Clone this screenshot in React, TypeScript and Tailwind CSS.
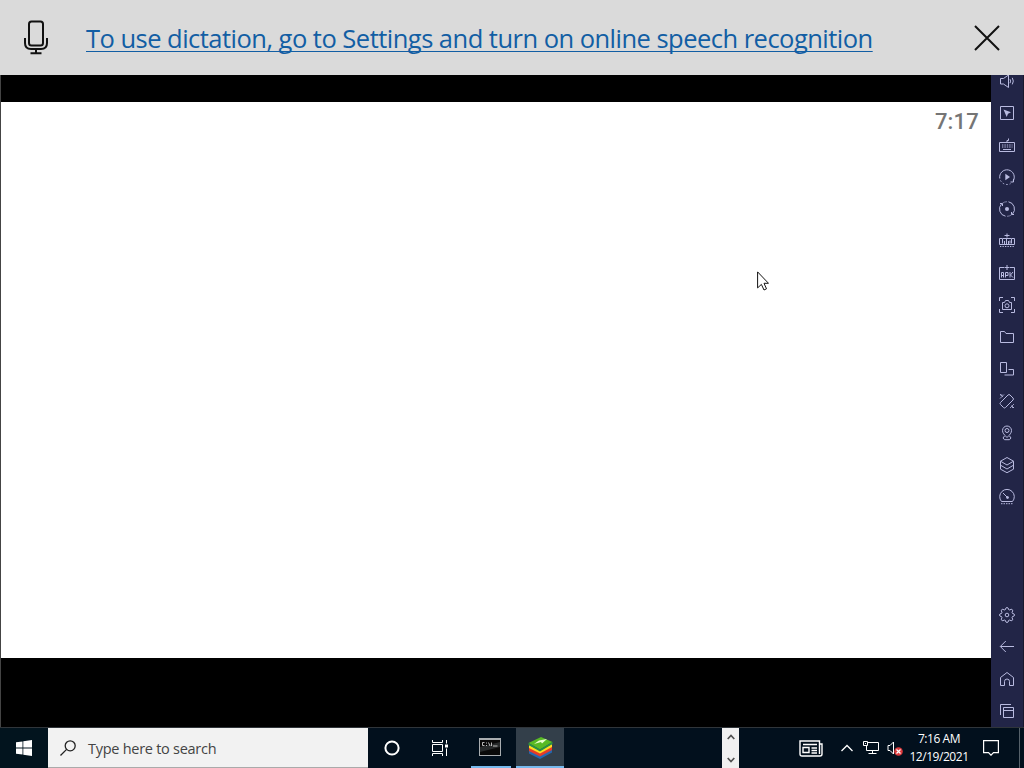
import type { ReactNode } from "react";

const toolIcons: { name: string; art: ReactNode }[] = [
	{
		name: "volume",
		art: (
			<>
				<path d="M3.5 7.5h3l5-3.5v12.500l-5-3.500h-3z" />
				<path d="M13 8.200q1.200 1.900 0 4M15.300 6.800q2 3.300 0 6.600" />
			</>
		),
	},
	{
		name: "pointer",
		art: (
			<>
				<path d="M3.500 3.500h13v13h-13z" />
				<path d="M6.500 6.500l7.500 2.800-3 1.500-1.300 3.200z" fill="currentColor" stroke="none" />
			</>
		),
	},
	{
		name: "keyboard",
		art: (
			<>
				<path d="M2.500 7.500h15v9h-15zM10 7V5.500h1.500V3.500" />
				<path d="M5 10h10.500M5 12h10.500" strokeDasharray="1.400 1" />
				<path d="M6 14.500h8" />
			</>
		),
	},
	{
		name: "macro",
		art: (
			<>
				<path d="M2.800 11.500A7.300 7.300 0 1 1 16 14.200M16.500 12v3h-3" />
				<path d="M3.500 13.500A7.500 7.500 0 0 0 13.500 16.700" strokeDasharray="1.500 2" />
				<path d="M8.300 6.800l4.700 3.200-4.700 3.200z" fill="currentColor" stroke="none" />
			</>
		),
	},
	{
		name: "sync",
		art: (
			<>
				<path d="M8.500 17.200A7.300 7.300 0 0 1 4.500 5M3 4.500h2.500V7M11.500 2.800A7.300 7.300 0 0 1 15.500 15M17 15.500h-2.500V13" />
				<path d="M5.500 4.200A7.300 7.300 0 0 1 10 2.700M14.500 15.800A7.300 7.300 0 0 1 10 17.300" strokeOpacity=".6" />
				<circle cx="10" cy="10" r="2" fill="currentColor" stroke="none" />
			</>
		),
	},
	{
		name: "memory",
		art: (
			<>
				<path d="M5 7.500H2.500v6h15v-6H15M10 2.500v4M7.500 4.500h5" />
				<path d="M5.500 12.500v-5h9v5M7.500 13V10M9.500 13V8M11.500 10v3M13 9.500v3" />
				<path d="M3 15.500h14" strokeDasharray="1.300 1.200" />
			</>
		),
	},
	{
		name: "apk",
		art: (
			<>
				<path d="M7 4.500H2.500v12h15v-12H13M10 2v5M7.500 4.500h5" />
				<path d="M4.500 14.500v-5h2v5M4.500 12.500h2M8.500 14.500v-5h2.500v3H8.500M13 9v5.500M16 9l-2.500 3 2.500 2.500" />
			</>
		),
	},
	{
		name: "screenshot",
		art: (
			<>
				<path d="M6 2.500H2.500V6M14 2.500h3.500V6M2.500 14v3.500H6M17.500 14v3.500H14" />
				<path d="M5.500 7.500h2l1-2h3l1 2h2v7h-9z" />
				<circle cx="10" cy="10.800" r="2" />
			</>
		),
	},
	{
		name: "folder",
		art: <path d="M3.500 15.500v-11h4l1.500 2h7.500v9z" />,
	},
	{
		name: "rotate",
		art: <path d="M3.500 3.500h6v10h-6zM11.500 10.500h5v5.500h-9" />,
	},
	{
		name: "shake",
		art: (
			<>
				<path d="M3.500 11.500l7.500-7.500q1-1 2 0l3 3q1 1 0 2l-7.500 7.500q-1 1-2 0l-3-3q-1-1 0-2z" />
				<path d="M3 7.500l4-4M3 4h2.500M3 3l3 3M13 17l4-4M14.500 14.500l2.500 2.500M15 16.500h2" strokeWidth=".8" />
			</>
		),
	},
	{
		name: "location",
		art: (
			<>
				<path d="M10 14.500C7 11.500 5.500 10 5.500 7.500a4.500 4.500 0 0 1 9 0c0 2.500-1.500 4-4.500 7z" />
				<circle cx="10" cy="7.500" r="2" />
				<path d="M7.500 13l-1.500 2 1.500 1.700h5L14 15l-1.500-2" />
			</>
		),
	},
	{
		name: "layers",
		art: <path d="M10 2.500l6.500 3.700v8L10 17.700l-6.500-3.500v-8zM3.500 6.200L10 10l6.500-3.800M3.500 10.200L10 14l6.500-3.800" />,
	},
	{
		name: "performance",
		art: (
			<>
				<path d="M4.500 14.500A7.300 7.300 0 1 1 15.500 14.500zM10.500 10.500L6 6" />
				<circle cx="10.500" cy="10.500" r="1" fill="currentColor" />
				<path d="M4 16.700h12" strokeDasharray="1.500 1" />
			</>
		),
	},
];

const navIcons: { name: string; art: ReactNode }[] = [
	{
		name: "settings",
		art: (
			<>
				<path d="M8.500 4.500Q8.500 2.500 10 2.500T11.500 4.500L12.800 5Q14.200 3.600 15.300 4.700T15 7.200L15.500 8.500Q17.500 8.500 17.500 10T15.500 11.500L15 12.800Q16.400 14.200 15.300 15.300T12.800 15L11.500 15.500Q11.500 17.500 10 17.500T8.500 15.500L7.200 15Q5.800 16.400 4.700 15.300T5 12.800L4.500 11.500Q2.500 11.500 2.500 10T4.500 8.500L5 7.200Q3.600 5.800 4.700 4.700T7.200 5z" />
				<circle cx="10" cy="10" r="1.800" />
			</>
		),
	},
	{ name: "back", art: <path d="M17 9.500H3.500M8.800 4L3.300 9.500l5.500 5.500" /> },
	{
		name: "home",
		art: <path d="M3.500 16.500V8.500L10 3.500l6.500 5v8H12.500v-4a2.500 2.500 0 0 0-5 0v4z" />,
	},
	{
		name: "recents",
		art: <path d="M6.500 6.500h10v10H6.500zM6.500 9.500H17M3.500 14V3.500H14" />,
	},
];

const SideIcon = ({ children }: { children: ReactNode }) => (
	<div className="flex h-8 w-8 shrink-0 items-center justify-center">
		<svg
			className="size-5 text-[#b9bbe0]"
			viewBox="0 0 20 20"
			fill="none"
			stroke="currentColor"
			strokeWidth="1"
		>
			{children}
		</svg>
	</div>
);

const DictationBar = () => (
	<header className="z-10 flex h-[75px] shrink-0 items-center bg-[#dadada]">
		<svg className="mb-px ml-5 h-9 w-8 shrink-0" viewBox="0 0 32 36" fill="none" stroke="#111" strokeWidth="2">
			<rect x="9" y="2.500" width="14" height="24" rx="2.500" />
			<path d="M5 19v5q0 6 6 6h10q6 0 6-6v-5M16 30v4M10.500 34.200h11" />
		</svg>
		<a
			href="#settings"
			className="ml-[34px] w-[800px] whitespace-nowrap text-[25.500px] leading-9 tracking-[-0.52px] text-[#125ea4] underline decoration-1 underline-offset-[3px] [text-decoration-skip-ink:none]"
		>
			To use dictation, go to Settings and turn on online speech recognition
		</a>
		<svg className="ml-[87px] size-7 shrink-0" viewBox="0 0 28 28" stroke="#111" strokeWidth="2">
			<path d="M2 2l24 24M26 2L2 26" />
		</svg>
	</header>
);

const Emulator = () => (
	<main className="flex min-h-0 flex-1">
		<section className="flex flex-1 flex-col border-l border-[#444] bg-black pb-[69px] pt-[27px]">
			<div className="flex-1 bg-white pr-3 pt-1.5 text-right font-[Roboto] text-[22px] font-medium leading-7 tracking-[0.2px] text-[#757575]">
				7:17
			</div>
		</section>
		<aside className="flex w-[33px] flex-col justify-between border-r border-[#17182c] bg-[#222547]">
			<div className="-mt-2.5 flex flex-col">
				{toolIcons.map((icon) => (
					<SideIcon key={icon.name}>{icon.art}</SideIcon>
				))}
			</div>
			<div className="flex flex-col">
				{navIcons.map((icon) => (
					<SideIcon key={icon.name}>{icon.art}</SideIcon>
				))}
			</div>
		</aside>
	</main>
);

const Taskbar = () => (
	<footer className="flex h-[41px] shrink-0 border-t border-[#30353a] bg-[#02101d]">
		<button className="flex w-12 items-center justify-center bg-[#02141e]">
			<svg className="size-4" viewBox="0 0 16 16" fill="#fff">
				<path d="M0 2.300L6.500 1.400v6.200H0zM7.300 1.300L16 0v7.600H7.300zM0 8.400h6.500v6.200L0 13.700zM7.300 8.400H16V16l-8.700-1.300z" />
			</svg>
		</button>
		<div className="flex w-80 items-center border-b border-[#aaa] bg-[#f2f2f2] pl-3">
			<svg className="size-4" viewBox="0 0 16 16" fill="none" stroke="#222" strokeWidth="1.300">
				<circle cx="10.200" cy="5.800" r="5" />
				<path d="M6.600 9.400L.5 15.500" />
			</svg>
			<span className="ml-3 mt-0.5 whitespace-nowrap text-[14.500px] tracking-[-0.27px] text-[#444]">
				Type here to search
			</span>
		</div>
		<button className="flex w-12 items-center justify-center">
			<svg className="size-4" viewBox="0 0 16 16" fill="none" stroke="#fff" strokeWidth="2">
				<circle cx="8" cy="8" r="6.600" />
			</svg>
		</button>
		<button className="flex w-12 items-center justify-center">
			<svg className="size-4" viewBox="0 0 16 16" fill="none" stroke="#fff">
				<path d="M.5 0v2.500h10V0M.5 16v-2.500h10V16M.5 4.500h10v7H.5zM14.500 0v3.500M14.500 8.500V16" />
				<path d="M13 4.500h3v3h-3z" fill="#fff" stroke="none" />
			</svg>
		</button>
		<button className="ml-[7px] flex w-10 justify-center border-b-2 border-[#76b9ed] pr-0.5 pt-2.5">
			<svg className="h-[18px] w-[22px]" viewBox="0 0 22 18">
				<path d="M0 0h22v18H0z" fill="#a9adb0" />
				<path d="M1 2h20v15H1z" fill="#090909" />
				<path d="M1 9l20-5v5L1 14z" fill="#272a2b" />
				<path d="M5.500 4.500h-2v3h2M7.500 4.500v1M7.500 7v1M9.500 4.500l1.500 3.500M12.500 4.500V8M14 8h4.500" stroke="#ccc" strokeWidth=".9" fill="none" />
			</svg>
		</button>
		<button className="ml-[5px] flex w-12 justify-center border-b-2 border-[#76b9ed] bg-[#333f4a] pt-[9px]">
			<svg className="h-[22px] w-[25px]" viewBox="0 0 25 22">
				<path d="M1 12l11 5.500L24 11v4.500L12 22 1 16.500z" fill="#2467b0" />
				<path d="M1 10.500l11 5.500 12-6.500v3.500L12 19.500 1 14z" fill="#e73b28" />
				<path d="M1 8l11 5.500L24 7v3L12 16.500 1 11z" fill="#ffdc20" />
				<path d="M.5 6L13 0l11.500 5L12 12.500z" fill="#58ba24" />
				<path d="M.5 6L12 12.500 24.500 5v2L12 14.500.5 8z" fill="#259447" />
				<path d="M6 7l5-3.500 8-1.500-5 4.500-1-1.500z" fill="#eaffcd" />
			</svg>
		</button>
		<div className="ml-[158px] flex w-[17px] flex-col items-center justify-between bg-[#f0f0f0] pb-[5px] pt-1.5">
			<svg className="h-[6px] w-2" viewBox="0 0 8 6" fill="none" stroke="#505050" strokeWidth="1.700">
				<path d="M.7 5L4 1.500 7.300 5" />
			</svg>
			<svg className="h-[6px] w-2" viewBox="0 0 8 6" fill="none" stroke="#505050" strokeWidth="1.700">
				<path d="M.7 1L4 4.500 7.300 1" />
			</svg>
		</div>
		<div className="ml-[60px] flex items-center text-white">
			<svg className="h-[17px] w-6" viewBox="0 0 24 17" fill="none" stroke="currentColor" strokeWidth="1.400">
				<path d="M20.500 4H23v10q0 2-2 2H3q-2 0-2-2V1h19.500v13" />
				<path d="M4 4.500h14M4 7.500h6v5H4zM12.500 8H18M12.500 10.500H18M12.500 13H18" />
			</svg>
			<svg className="ml-[18px] h-2 w-3" viewBox="0 0 12 8" fill="none" stroke="currentColor" strokeWidth="1.300">
				<path d="M.5 7L6 1.500 11.500 7" />
			</svg>
			<svg className="ml-2.5 h-3.5 w-4" viewBox="0 0 16 14" fill="none" stroke="currentColor">
				<path d="M5 1.500h10.500v8h-12V5M9.500 9.500v3M5.500 12.500h8M.5.500h4v4h-4zM2.500 2v1" />
			</svg>
			<svg className="ml-2 h-4 w-[17px]" viewBox="0 0 17 16" fill="none" stroke="currentColor">
				<path d="M1 5.500h2L6.500 2v12L3 10.500H1z" />
				<circle cx="11.500" cy="11.500" r="4.300" fill="#dc3a3d" stroke="none" />
				<path d="M9.500 9.500l4 4M13.500 9.500l-4 4" strokeWidth="1.200" />
			</svg>
			<div className="ml-1 flex w-[62px] flex-col items-center whitespace-nowrap text-[12px] leading-[18px] tracking-[-0.45px]">
				<span>7:16 AM</span>
				<span>12/19/2021</span>
			</div>
			<svg className="ml-[13px] size-4" viewBox="0 0 16 16" fill="none" stroke="currentColor" strokeWidth="1.200">
				<path d="M.6.600h14.800v12H10.500L8 15.200 5.500 12.600H.6z" />
			</svg>
		</div>
		<div className="ml-auto w-[5px] border-l border-[#56616a]" />
	</footer>
);

export default function App() {
	return (
		<div className="relative flex h-screen w-screen flex-col overflow-hidden bg-black font-['Open_Sans',sans-serif]">
			<DictationBar />
			<Emulator />
			<Taskbar />
			<svg className="absolute left-[757px] top-[271px] h-5 w-3" viewBox="0 0 12 20">
				<path d="M.6.900v16l3.800-3.500L7 19l2.500-1.200L7 12.300h4.500z" fill="#fff" stroke="#111" />
			</svg>
		</div>
	);
}
